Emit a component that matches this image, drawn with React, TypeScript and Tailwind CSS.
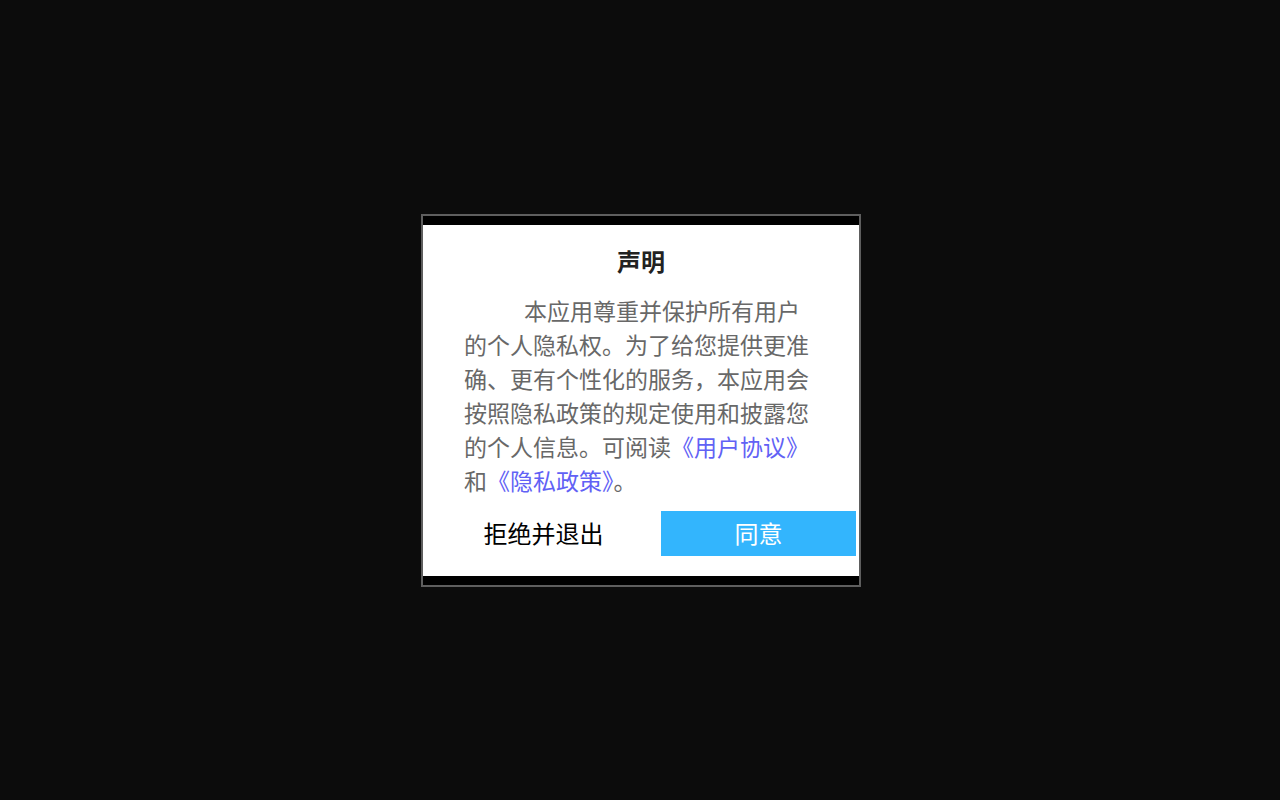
export default function App() {
  return (
    <div
      className="min-h-screen w-full bg-[#0c0c0c] flex items-center justify-center"
      style={{ fontFamily: '"Noto Sans CJK SC", "Noto Sans", sans-serif' }}
    >
      <div className="w-[440px] ml-[2px] border-2 border-[#5e5e5e] bg-black py-[9px]">
        <div className="bg-white flex flex-col">
          <h1 className="pt-[19px] text-center text-[24px] leading-[34px] font-semibold text-[#222]">
            声明
          </h1>
          <p className="mt-[15px] px-[41px] text-[23px] leading-[34px] text-[#686868] indent-[60px]">
            本应用尊重并保护所有用户的个人隐私权。为了给您提供更准确、更有个性化的服务，本应用会按照隐私政策的规定使用和披露您的个人信息。可阅读
            <span className="text-[#6161f5]">《用户协议》</span>和
            <span className="text-[#6161f5]">《隐私政策》</span>。
          </p>
          <div className="mt-[14px] mb-[20px] flex gap-[20px] pl-[23px] pr-[2px]">
            <button className="w-[195px] h-[45px] text-[24px] text-black bg-white">
              拒绝并退出
            </button>
            <button className="w-[195px] h-[45px] text-[24px] text-white bg-[#33b5fd]">
              同意
            </button>
          </div>
        </div>
      </div>
    </div>
  );
}
